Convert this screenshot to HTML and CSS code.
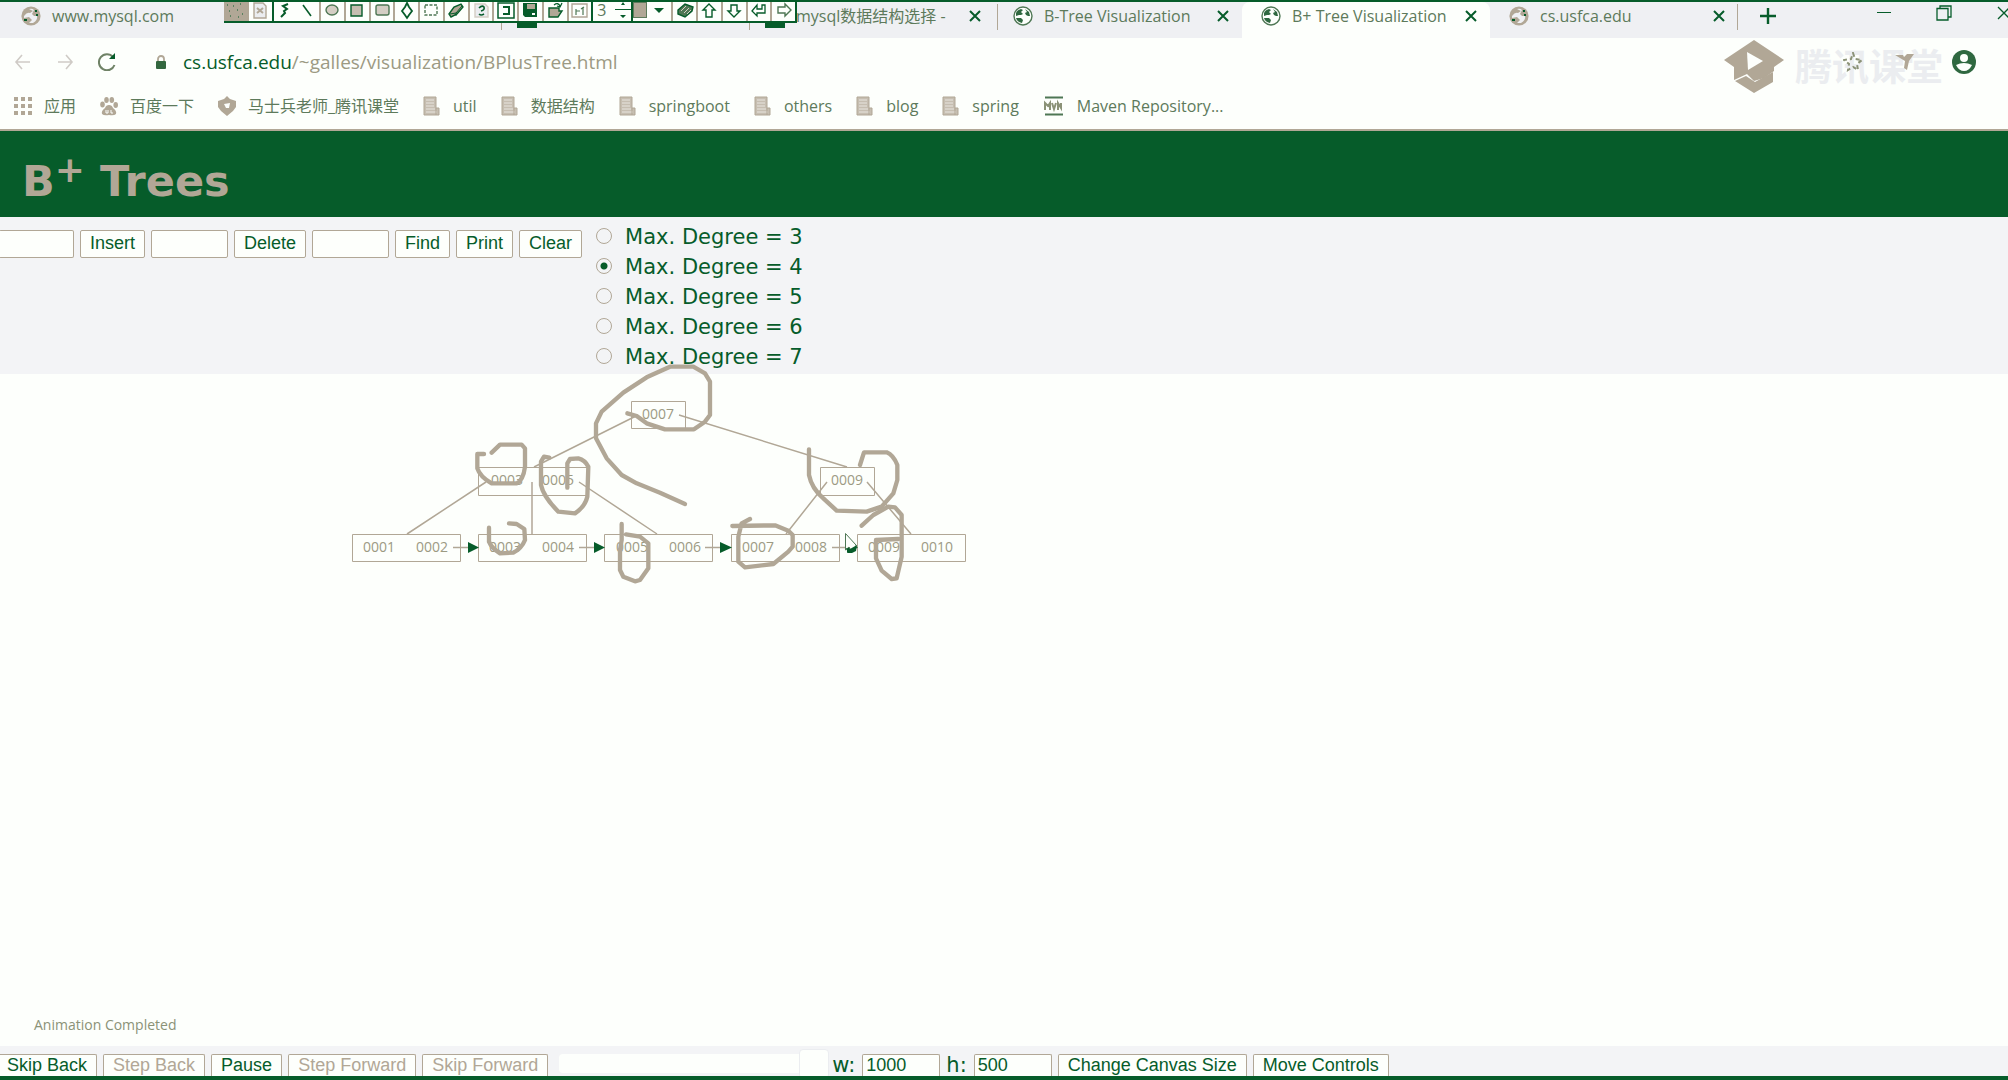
FILE: index.html
```html
<!DOCTYPE html>
<html lang="en">
<head>
<meta charset="utf-8">
<title>B+ Tree Visualization</title>
<link rel="stylesheet" href="styles.css">
</head>
<body>
<svg class="defs" aria-hidden="true">
  <symbol id="globe" viewBox="0 0 20 20"><circle cx="10" cy="10" r="9" fill="#fdfffc" stroke="#4e7754" stroke-width="1.4"/><path d="M3 7Q4 4 8 3L10 4L8 6L10 8L8 9L6 9L3 10ZM12 3L16 6L17 10L15 10L13 9L12 7L14 6ZM3 12L8 12L10 14L9 17Q4 16 3 12Z" fill="#2f6840"/></symbol>
  <symbol id="globe-dim" viewBox="0 0 20 20"><circle cx="10" cy="10" r="9.6" fill="#b1a796"/><path d="M3 10Q6 6 9 7L12 5L8 3Q11 2 13 4L11 8L13 10L16 10Q17 14 12 17L8 17L11 14L8 11L3 12Z" fill="#eff0f3"/><path d="M14 4h2v2h-2zM15 8h2v2h-2zM3 13h3v2H3z" fill="#065c2a"/></symbol>
  <symbol id="cross" viewBox="0 0 12 12"><path d="M1 1L11 11M11 1L1 11" stroke="#065c2a" stroke-width="2"/></symbol>
  <symbol id="folder" viewBox="0 0 18 20"><path d="M1 1H13V12H16V19H1Z" fill="#c6beb1" stroke="#b1a796"/><path d="M3 4H11M3 7H11M3 10H11M3 13H12M3 16H14" stroke="#e8e5df"/><path d="M13 12V19" stroke="#b1a796"/></symbol>
</svg>

<header class="browser">
  <div class="tabs">
    <div class="tab"><svg class="fav"><use href="#globe-dim"/></svg><span class="name">www.mysql.com</span></div>
    <div class="tab"></div>
    <div class="tab"><i class="stub"></i></div>
    <div class="tab"><i class="stub"></i><span class="name">mysql数据结构选择 -</span><button class="close" aria-label="Close tab"><svg><use href="#cross"/></svg></button></div>
    <div class="tab before"><svg class="fav"><use href="#globe"/></svg><span class="name">B-Tree Visualization</span><button class="close" aria-label="Close tab"><svg><use href="#cross"/></svg></button></div>
    <div class="tab active"><svg class="fav"><use href="#globe"/></svg><span class="name">B+ Tree Visualization</span><button class="close" aria-label="Close tab"><svg><use href="#cross"/></svg></button></div>
    <div class="tab after"><svg class="fav"><use href="#globe-dim"/></svg><span class="name">cs.usfca.edu</span><button class="close" aria-label="Close tab"><svg><use href="#cross"/></svg></button></div>
    <button class="new-tab" aria-label="New tab"><svg viewBox="0 0 16 16"><path d="M8 0V16M0 8H16" stroke="#065c2a" stroke-width="2.4"/></svg></button>
    <div class="window">
      <button aria-label="Minimise"><svg viewBox="0 0 16 16"><path d="M1 7.5H15" stroke="#065c2a"/></svg></button>
      <button aria-label="Restore"><svg viewBox="0 0 16 16"><path d="M4 3V1H15V12H12M1 3.5H12V15H1Z" fill="none" stroke="#065c2a" stroke-width="1.3"/></svg></button>
      <button aria-label="Close"><svg viewBox="0 0 16 16"><path d="M2 2L14 14M14 2L2 14" stroke="#065c2a" stroke-width="1.3"/></svg></button>
    </div>
  </div>

  <div class="paint">
    <button class="shade" aria-label="Screen"><svg viewBox="0 0 20 18"><path d="M2 3h1M8 4h1M15 2h1M4 9h1M12 8h1M17 12h1M5 14h1M13 15h1" stroke="#065c2a"/></svg></button>
    <button class="dark" aria-label="Clear page"><svg viewBox="0 0 20 18"><path d="M4 1H13L16 4V16H4Z" fill="#ebedf0" stroke="#b1a796" stroke-width="1.4"/><path d="M7 6L13 11M13 6L7 11" stroke="#b1a796" stroke-width="2"/></svg></button>
    <button class="open" aria-label="Freehand"><svg viewBox="0 0 20 18"><path d="M13 2L8 4L12 7L9 9L10 11L6 15" fill="none" stroke="#065c2a" stroke-width="2"/></svg></button>
    <button aria-label="Line"><svg viewBox="0 0 20 18"><path d="M5 3L13 14" stroke="#065c2a" stroke-width="1.6"/></svg></button>
    <button aria-label="Ellipse"><svg viewBox="0 0 20 18"><ellipse cx="10" cy="8" rx="6" ry="5" fill="#d4cec4" stroke="#4e7754" stroke-width="1.4"/></svg></button>
    <button aria-label="Rectangle"><svg viewBox="0 0 20 18"><path d="M4 3H15V14H4Z" fill="#c6beb1" stroke="#065c2a" stroke-width="1.4"/></svg></button>
    <button aria-label="Rounded rectangle"><svg viewBox="0 0 20 18"><rect x="4" y="3" width="13" height="10" rx="2" fill="#d4cec4" stroke="#4e7754" stroke-width="1.4"/></svg></button>
    <button aria-label="Diamond"><svg viewBox="0 0 20 18"><path d="M10 1L12 5L15 9L12 13L10 16L8 13L5 9L8 5Z" fill="none" stroke="#065c2a" stroke-width="1.8"/></svg></button>
    <button aria-label="Select"><svg viewBox="0 0 20 18"><path d="M4 3H16V13H4Z" fill="none" stroke="#4e7754" stroke-dasharray="3 1.5" stroke-width="1.4"/></svg></button>
    <button aria-label="Eraser"><svg viewBox="0 0 20 18"><path d="M3 12L8 5L15 2L17 5L11 12L5 15Z" fill="#b1a796" stroke="#065c2a" stroke-width="1.4"/><path d="M4 12L10 11L16 4M10 11V14" fill="none" stroke="#065c2a"/></svg></button>
    <button aria-label="Step numbers"><svg viewBox="0 0 20 18"><path d="M4 2H14L17 5V15H4Z" fill="#ebedf0" stroke="#d4cec4" stroke-width="1.4"/><path d="M8 6Q11 3 13 5Q14 8 10 9M8 12Q10 14 13 12" fill="none" stroke="#065c2a" stroke-width="1.6"/></svg></button>
    <button aria-label="Capture"><svg viewBox="0 0 20 18"><path d="M2 1H18V16H2Z" fill="none" stroke="#065c2a" stroke-width="1.5"/><path d="M7 5H13V12H7" fill="none" stroke="#065c2a" stroke-width="2"/></svg></button>
    <button aria-label="Save"><svg viewBox="0 0 20 18"><path d="M3 1H17V15H5L3 13Z" fill="#065c2a"/><path d="M7 2H15V7H7Z" fill="#b1a796"/><path d="M12 11H15V13H12Z" fill="#fdfffc"/></svg></button>
    <button aria-label="Open"><svg viewBox="0 0 20 18"><path d="M4 6H14V9H17L13 15H4Z" fill="#b1a796" stroke="#065c2a" stroke-width="1.4"/><path d="M9 3Q13 0 15 4M17 1L15 5L12 4" fill="none" stroke="#065c2a" stroke-width="1.3"/></svg></button>
    <button class="dark" aria-label="Text"><svg viewBox="0 0 20 18"><path d="M2 2H17V15H2Z" fill="none" stroke="#b1a796" stroke-width="1.4"/><path d="M6 7V13M6 9H10M13 5V13M11 7L14 5" fill="none" stroke="#4e7754" stroke-width="1.2"/></svg></button>
    <label class="size"><input value="3" aria-label="Pen size"><svg viewBox="0 0 16 18"><path d="M8 0L10 3H6ZM8 16L5 13H11Z" fill="#065c2a"/><path d="M0 7.5H16" stroke="#065c2a"/></svg></label>
    <button class="colour" aria-label="Pen colour"><i></i><svg viewBox="0 0 24 18"><path d="M7 6H17L12 11Z" fill="#065c2a"/></svg></button>
    <button aria-label="Palette"><svg viewBox="0 0 20 18"><path d="M3 8L10 2L18 5L17 9L10 15L3 12Z" fill="#4e7754" stroke="#065c2a" stroke-width="1.4"/><path d="M6 9L11 4M9 11L14 6M12 12L16 8" stroke="#d4cec4"/></svg></button>
    <button aria-label="Up"><svg viewBox="0 0 20 18"><path d="M10 2L16 8H13V15H7V8H4Z" fill="none" stroke="#065c2a" stroke-width="1.4"/></svg></button>
    <button aria-label="Down"><svg viewBox="0 0 20 18"><path d="M10 15L16 9H13V3H7V9H4Z" fill="none" stroke="#065c2a" stroke-width="1.4"/></svg></button>
    <button aria-label="Back"><svg viewBox="0 0 20 18"><path d="M3 9L8 3V7H13V3H16V11H8V14Z" fill="none" stroke="#065c2a" stroke-width="1.3"/></svg></button>
    <button aria-label="Forward"><svg viewBox="0 0 20 18"><path d="M17 8L11 2V5H4V11H11V14Z" fill="none" stroke="#4e7754" stroke-width="1.4"/></svg></button>
  </div>

  <div class="address">
    <nav class="nav">
      <button aria-label="Back"><svg viewBox="0 0 18 18"><path d="M16 9H2M8 2L2 9L8 16" fill="none" stroke="#cfcbc6" stroke-width="1.6"/></svg></button>
      <button aria-label="Forward"><svg viewBox="0 0 18 18"><path d="M2 9H16M10 2L16 9L10 16" fill="none" stroke="#cfcbc6" stroke-width="1.6"/></svg></button>
      <button aria-label="Reload"><svg viewBox="0 0 18 18"><path d="M15 4A8 8 0 1 0 16.500 12" fill="none" stroke="#6f8266" stroke-width="2"/><path d="M11 6H17V0Z" fill="#065c2a"/></svg></button>
    </nav>
    <svg class="lock" viewBox="0 0 12 14"><path d="M3 6V4A3 3 0 0 1 9 4V6" fill="none" stroke="#b1a796" stroke-width="1.8"/><rect x="1" y="6" width="10" height="8" rx="1" fill="#33673f"/></svg>
    <span class="url"><b>cs.usfca.edu</b>/~galles/visualization/BPlusTree.html</span>
    <div class="extras">
      <div class="brand">
        <svg viewBox="0 0 62 54"><path d="M31 0L61 20L51 27L51 31L41 38L31 41L24 34L11 40V27L1 20Z" fill="#b1a796"/><path d="M12 41L23 36L32 42L50 32V42L31 53Z" fill="#b1a796"/><path d="M24 12L40 21L25 30Z" fill="#fdfffc"/></svg>
        <span>腾讯课堂</span>
        <svg class="star" viewBox="0 0 20 20"><path d="M10 1L12 7L19 8L14 12L15 18L10 15L5 18L6 12L1 8L8 7Z" fill="none" stroke="#8b9277" stroke-width="2" stroke-dasharray="4 3"/></svg>
        <svg class="bird" viewBox="0 0 20 20"><path d="M0 3H8L9 5L12 2H19L14 9L12 18L9 16L10 9Z" fill="#b1a796"/></svg>
      </div>
      <svg class="user" viewBox="0 0 26 26"><circle cx="13" cy="13" r="12" fill="#2f6840"/><circle cx="13" cy="9" r="4" fill="#fdfffc"/><path d="M5 16Q13 12 21 16Q18 22 13 22Q8 22 5 16Z" fill="#fdfffc"/></svg>
    </div>
  </div>

  <nav class="bookmarks">
    <a href="#"><svg viewBox="0 0 18 20"><path d="M0 3H4M7 3H11M14 3H18M0 10H4M7 10H11M14 10H18M0 17H4M7 17H11M14 17H18" stroke="#b1a796" stroke-width="4"/></svg>应用</a>
    <a href="#"><svg viewBox="0 0 18 20" fill="#b1a796"><ellipse cx="2.500" cy="8.500" rx="2.300" ry="3"/><ellipse cx="6.500" cy="4" rx="2.300" ry="3"/><ellipse cx="11.800" cy="4" rx="2.300" ry="3"/><ellipse cx="15.700" cy="9" rx="2.300" ry="3"/><path d="M9 9Q12 9 13 12Q17 15 16 18Q14 20 9 19Q4 20 2 18Q1 15 5 12Q6 9 9 9Z"/><path d="M6 14V17H8V14M11 14V17H13" fill="none" stroke="#fdfffc"/></svg>百度一下</a>
    <a href="#"><svg viewBox="0 0 18 20"><path d="M9 0L12 3L18 5V11L15 15L9 20L3 15L0 11V5L6 3Z" fill="#b1a796"/><path d="M6 8L12 7L11 12L8 12Z" fill="#fdfffc"/></svg>马士兵老师_腾讯课堂</a>
    <a href="#"><svg><use href="#folder"/></svg>util</a>
    <a href="#"><svg><use href="#folder"/></svg>数据结构</a>
    <a href="#"><svg><use href="#folder"/></svg>springboot</a>
    <a href="#"><svg><use href="#folder"/></svg>others</a>
    <a href="#"><svg><use href="#folder"/></svg>blog</a>
    <a href="#"><svg><use href="#folder"/></svg>spring</a>
    <a href="#"><svg class="wide" viewBox="0 0 20 20"><path d="M1 1.500H19M1 18.500H19" stroke="#4e7754" stroke-width="2"/><path d="M1 14V7L4 10L6 7V14M8 7L10 13L12 7M14 14V7L17 12V7" fill="none" stroke="#8b9277" stroke-width="2"/></svg>Maven Repository...</a>
  </nav>
</header>

<h1>B<sup>+</sup> Trees</h1>

<form class="controls">
  <div class="ops">
    <input class="first" aria-label="Value to insert"><button type="button">Insert</button>
    <input aria-label="Value to delete"><button type="button">Delete</button>
    <input aria-label="Value to find"><button type="button">Find</button>
    <button type="button">Print</button>
    <button type="button">Clear</button>
  </div>
  <div class="degrees">
    <label><input type="radio" name="degree">Max. Degree = 3</label>
    <label><input type="radio" name="degree" checked>Max. Degree = 4</label>
    <label><input type="radio" name="degree">Max. Degree = 5</label>
    <label><input type="radio" name="degree">Max. Degree = 6</label>
    <label><input type="radio" name="degree">Max. Degree = 7</label>
  </div>
</form>

<main class="canvas">
  <svg class="tree" viewBox="0 374 1000 226">
    <g class="box">
      <path d="M631.500 401.500h54v27h-54zM478.500 467.500h110v28h-110zM820.500 467.500h54v28h-54z"/>
      <path d="M352.500 534.500h108v27h-108zM478.500 534.500h108v27h-108zM604.500 534.500h108v27h-108zM731.500 534.500h108v27h-108zM857.500 534.500h108v27h-108z"/>
    </g>
    <g class="edge">
      <path d="M638 415L534 467M679 415L847 467M486 482L407 534M532 482V534M579 482L657 534M827 482L786 534M867 482L911 534"/>
      <path d="M453 547.500H470M579 547.500H596M705 547.500H722M832 547.500H849"/>
    </g>
    <path d="M468 542L479 547.500L468 553ZM594 542L605 547.500L594 553ZM720 542L732 547.500L720 553ZM847 542L858 547.500L847 553Z" fill="#065c2a"/>
    <g class="keys">
      <text x="658" y="419">0007</text>
      <text x="507" y="485">0003</text><text x="558" y="485">0005</text><text x="847" y="485">0009</text>
      <text x="379" y="552">0001</text><text x="432" y="552">0002</text>
      <text x="505" y="552">0003</text><text x="558" y="552">0004</text>
      <text x="632" y="552">0005</text><text x="685" y="552">0006</text>
      <text x="758" y="552">0007</text><text x="811" y="552">0008</text>
      <text x="884" y="552">0009</text><text x="937" y="552">0010</text>
    </g>
    <g class="ink" transform="translate(340 360) scale(.33333)">
      <path d="M1035 432L960 398L890 370L845 345L800 295L768 235V190L785 155L850 98L920 52L990 20H1060L1095 40L1110 65V165L1095 185L1062 208H975L920 190L890 168L862 160"/>
      <path d="M432 282H412V325Q420 350 455 370H530Q550 360 555 320V265L545 254H480L455 278"/>
      <path d="M628 293L612 290L603 305V375Q610 410 655 455L705 460Q735 440 742 410L745 320Q735 300 715 295L690 297L682 310V383"/>
      <path d="M507 490L530 492L553 507L555 540Q545 565 520 578L480 580Q455 565 447 545V503"/>
      <path d="M845 492V540L840 570V630L850 650L885 664L900 660L925 625V550L900 530L858 523"/>
      <path d="M1407 268V345Q1415 385 1450 415L1490 452L1580 455L1625 440L1660 400L1672 360V315Q1660 285 1640 277H1572L1560 315"/>
      <path d="M1177 498L1305 496L1345 512L1358 525V560L1345 575L1300 612L1215 622L1195 605V530L1205 490L1230 477"/>
      <path d="M1565 497L1600 465L1645 440L1665 442L1685 465V590L1670 655L1655 657L1625 632L1608 595V540L1675 537"/>
    </g>
    <path d="M845.500 533.500V550L849 547L852 552L856 548V545Z" fill="#fdfffc" stroke="#4e7754"/>
    <path d="M846 548L850 549L857 545L856 551L852 553H848Z" fill="#065c2a"/>
  </svg>
  <p class="status">Animation Completed</p>
</main>

<footer class="player">
  <button class="skip">Skip Back</button>
  <button disabled>Step Back</button>
  <button>Pause</button>
  <button disabled>Step Forward</button>
  <button disabled>Skip Forward</button>
  <input type="range" value="100" aria-label="Animation speed">
  <label>w:<input value="1000"></label>
  <label>h:<input value="500"></label>
  <button>Change Canvas Size</button>
  <button>Move Controls</button>
</footer>
</body>
</html>
```
FILE: styles.css
```css
:root {
  --green: #065c2a;
  --tan: #b1a796;
  --mid: #5d7a5b;
  --paper: #fdfffc;
  --mist: #f3f4f6;
  --strip: #eff0f3;
}

* { box-sizing: border-box; }

body {
  margin: 0;
  height: 100vh;
  min-height: 700px;
  display: flex;
  flex-direction: column;
  overflow: hidden;
  border-top: 2px solid var(--green);
  border-bottom: 4px solid var(--green);
  background: var(--paper);
  color: var(--green);
  font-family: "DejaVu Sans", sans-serif;
}

.defs { position: absolute; width: 0; height: 0; }

button { margin: 0; padding: 0; border: 0; background: none; color: inherit; }
svg { display: block; flex: none; }

/* Browser chrome */
.browser {
  position: relative;
  flex: none;
  border-bottom: 2px solid var(--tan);
  font-family: "Open Sans", "Noto Sans CJK SC", sans-serif;
  font-size: 16px;
  color: var(--mid);
}

.tabs {
  display: flex;
  height: 36px;
  padding-left: 2px;
  background: var(--strip);
}

.tab {
  position: relative;
  flex: none;
  display: flex;
  align-items: center;
  gap: 11px;
  width: 248px;
  height: 36px;
  padding: 0 13px 8px 19px;
}

.tab::after {
  content: "";
  position: absolute;
  right: -4px;
  top: 2px;
  width: 1px;
  height: 26px;
  background: var(--tan);
}
.tab:first-child::after { background: none; }
.tab.before::after, .tab.active::after { display: none; }
.tab.active { background: var(--paper); border-radius: 8px 8px 0 0; }
.tab.after::after { right: 0; }

.fav { width: 20px; height: 20px; }
.stub { width: 20px; height: 20px; margin-bottom: -4px; background: var(--green); }
.name { flex: 1; line-height: 24px; white-space: nowrap; }
.close svg { width: 12px; height: 12px; }
.new-tab { height: 28px; margin-left: 22px; }
.new-tab svg { width: 16px; height: 16px; }
.window { display: flex; gap: 44px; height: 22px; margin: 0 -4px 0 auto; }
.window svg { width: 16px; height: 16px; }

/* Drawing toolbar that floats over the tabs */
.paint {
  position: absolute;
  left: 224px;
  top: 0;
  display: flex;
  width: 573px;
  height: 21px;
  background: var(--paper);
  border-right: 2px solid var(--green);
  border-bottom: 2px solid var(--green);
}

.paint button {
  flex: 1;
  display: flex;
  justify-content: center;
  border-right: 2px solid var(--tan);
}
.paint svg { width: 20px; height: 18px; }
.paint .shade { background: var(--tan); }
.paint .dark { border-right-color: var(--green); }
.paint .open { border-right: 0; }
.paint button:last-child { border-right: 0; }

.size { display: flex; width: 38px; }
.size input {
  width: 22px;
  height: 16px;
  padding: 0 4px;
  border: 0;
  background: none;
  color: var(--mid);
  font: 16px/16px "Open Sans", sans-serif;
}
.paint .size svg { width: 16px; }
.paint .colour { flex: none; width: 42px; border-left: 2px solid var(--green); }
.colour i { width: 14px; height: 16px; background: var(--tan); border: 1px solid var(--mid); }
.paint .colour svg { width: 24px; }

.address {
  display: flex;
  align-items: center;
  height: 48px;
}

.nav { display: flex; gap: 24px; padding-left: 14px; }
.nav svg { width: 18px; height: 18px; }
.lock { width: 12px; height: 14px; margin: 0 16px 0 39px; }
.url { color: #9c9a83; font-size: 19px; line-height: 28px; white-space: nowrap; }
.url b { color: var(--green); font-weight: 400; }

.extras { display: flex; align-items: center; gap: 8px; margin: 0 31px 0 auto; }
.brand { position: relative; display: flex; align-items: center; gap: 10px; height: 48px; }
.brand > svg:first-child { width: 62px; height: 54px; margin-top: 10px; }
.brand span { color: #ebedf0; font-size: 37px; font-weight: 700; line-height: 40px; margin-top: 10px; }
.brand .star { position: absolute; left: 120px; top: 14px; width: 20px; height: 20px; }
.brand .bird { position: absolute; left: 172px; top: 14px; width: 20px; height: 20px; }
.user { width: 26px; height: 26px; }

.bookmarks {
  display: flex;
  align-items: center;
  gap: 24px;
  height: 43px;
  padding: 0 14px 4px;
}
.bookmarks a {
  display: flex;
  align-items: center;
  gap: 12px;
  color: inherit;
  line-height: 24px;
  text-decoration: none;
  white-space: nowrap;
}
.bookmarks svg { width: 18px; height: 20px; }
.bookmarks .wide { width: 22px; }

/* Page */
h1 {
  flex: none;
  height: 86px;
  margin: 0;
  padding: 25px 22px 0;
  background: var(--green);
  color: var(--tan);
  font-size: 43px;
  line-height: 50px;
}
h1 sup { font-size: 36px; line-height: 0; vertical-align: 14px; }

.controls {
  flex: none;
  display: flex;
  gap: 14px;
  height: 157px;
  padding-top: 5px;
  background: var(--mist);
}

.ops { display: flex; gap: 6px; padding-top: 8px; }

.ops input, .ops button, .player button, .player label input {
  height: 28px;
  border: 1px solid var(--tan);
  border-radius: 2px;
  background: var(--paper);
  color: var(--green);
  font: 18px/22px "Liberation Sans", sans-serif;
}
.ops input { width: 77px; }
.ops .first { width: 75px; margin-left: -1px; border-left: 0; }
.ops button { padding: 0 9px 2px; white-space: nowrap; }

.degrees label {
  display: flex;
  align-items: center;
  gap: 13px;
  height: 30px;
  font-size: 21px;
}
.degrees input {
  appearance: none;
  width: 16px;
  height: 16px;
  margin: 0 0 2px;
  border: 1px solid var(--tan);
  border-radius: 50%;
}
.degrees input:checked { background: radial-gradient(circle, var(--green) 3px, transparent 4px); }

.canvas {
  flex: 1;
  min-height: 0;
  display: flex;
  flex-direction: column;
  justify-content: space-between;
}

.tree { position: relative; width: 1000px; height: 226px; overflow: visible; }
.box { fill: none; stroke: var(--tan); }
.edge { fill: none; stroke: var(--tan); stroke-width: 1.5; }
.keys { fill: #9c9a83; font: 14px "Open Sans", sans-serif; text-anchor: middle; }
.ink { fill: none; stroke: var(--tan); stroke-width: 13; stroke-linecap: round; stroke-linejoin: round; }

.status {
  margin: 0;
  padding: 0 34px 11px;
  color: #8b9277;
  font: 14px/20px "Open Sans", sans-serif;
}

/* Playback bar */
.player {
  flex: none;
  display: flex;
  align-items: flex-start;
  gap: 6px;
  height: 30px;
  padding-top: 8px;
  background: var(--mist);
}
.player button, .player label input {
  height: 22px;
  border-bottom: 0;
  border-radius: 2px 2px 0 0;
  line-height: 21px;
}
.player button { padding: 0 9px; white-space: nowrap; }
.player .skip { margin-left: -3px; }
.player button:disabled { color: var(--tan); }
.player label { display: flex; gap: 7px; font-size: 21px; line-height: 22px; }
.player label input { width: 78px; padding: 0 3px; }

.player input[type="range"] {
  appearance: none;
  width: 270px;
  height: 19px;
  margin: 0 -3px 0 5px;
  border-radius: 4px;
  background: var(--paper);
}
.player input[type="range"]::-webkit-slider-thumb {
  appearance: none;
  width: 30px;
  height: 30px;
  border: 1px solid #ebedf0;
  border-radius: 4px;
  background: var(--paper);
}
```
